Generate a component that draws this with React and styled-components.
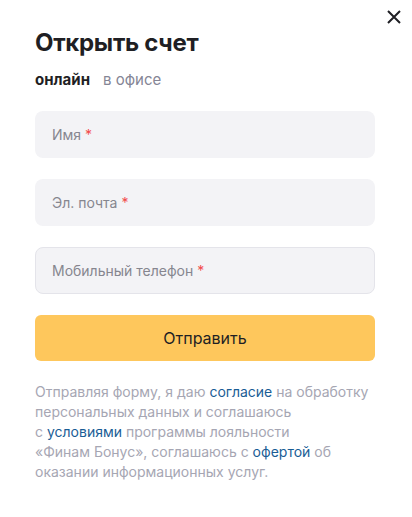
import styled, { createGlobalStyle } from 'styled-components';

const GlobalStyle = createGlobalStyle`
	body {
		margin: 0;
		background: #fff;
		font-family: Inter, "Noto Sans", sans-serif;
		color: #1f1f24;
	}
`;

const fields = [
	{ label: 'Имя', bordered: false },
	{ label: 'Эл. почта', bordered: false },
	{ label: 'Мобильный телефон', bordered: true },
];

const CloseIcon = () => (
	<svg width="14" height="14" viewBox="0 0 14 14" fill="none">
		<path d="M1 1L13 13M13 1L1 13" stroke="#1f1f24" strokeWidth="2" />
	</svg>
);

const App = () => {
	return (
		<>
			<GlobalStyle />
			<Modal>
				<CloseButton aria-label="close">
					<CloseIcon />
				</CloseButton>
				<Title>Открыть счет</Title>
				<Tabs>
					<Tab active>онлайн</Tab>
					<Tab>в офисе</Tab>
				</Tabs>
				<Form>
					{fields.map((field) => (
						<Field key={field.label} bordered={field.bordered}>
							{field.label} <Star>*</Star>
						</Field>
					))}
					<Submit>Отправить</Submit>
				</Form>
				<Note>
					Отправляя форму, я даю <Link>согласие</Link> на обработку
					<br />
					персональных данных и соглашаюсь
					<br />
					с <Link>условиями</Link> программы лояльности
					<br />
					«Финам Бонус», соглашаюсь с <Link>офертой</Link> об
					<br />
					оказании информационных услуг.
				</Note>
			</Modal>
		</>
	);
};

export default App;

const Modal = styled.div`
	position: relative;
	width: 412px;
	height: 517px;
	box-sizing: border-box;
	padding: 28px 37px 0 35px;
	display: flex;
	flex-direction: column;
`;

const CloseButton = styled.button`
	position: absolute;
	top: 10px;
	right: 11px;
	width: 14px;
	height: 14px;
	padding: 0;
	border: none;
	background: none;
	display: flex;
`;

const Title = styled.h1`
	margin: 0;
	font-size: 24px;
	line-height: 30px;
	font-weight: 700;
	letter-spacing: -0.3px;
	color: #1f1f24;
`;

const Tabs = styled.div`
	display: flex;
	gap: 13px;
	margin-top: 12px;
`;

const Tab = styled.span`
	font-size: 15px;
	line-height: 20px;
	font-weight: ${(p) => (p.active ? 700 : 400)};
	color: ${(p) => (p.active ? '#1f1f24' : '#858595')};
`;

const Form = styled.div`
	display: flex;
	flex-direction: column;
	gap: 21px;
	margin-top: 21px;
`;

const Field = styled.div`
	height: 47px;
	box-sizing: border-box;
	padding: 0 16px;
	display: flex;
	align-items: center;
	background: #f3f3f6;
	border: 1px solid ${(p) => (p.bordered ? '#e4e4ea' : 'transparent')};
	border-radius: 8px;
	font-size: 14px;
	color: #86868f;
`;

const Star = styled.span`
	color: #f24a4a;
	margin-left: 4px;
`;

const Submit = styled.button`
	height: 46px;
	border: none;
	border-radius: 6px;
	background: #fec75c;
	font-family: inherit;
	font-size: 16px;
	color: #1f1f24;
`;

const Note = styled.p`
	margin: 21px 0 0;
	font-size: 14px;
	line-height: 20px;
	color: #a6a6b3;
`;

const Link = styled.span`
	color: #1a5d95;
`;
